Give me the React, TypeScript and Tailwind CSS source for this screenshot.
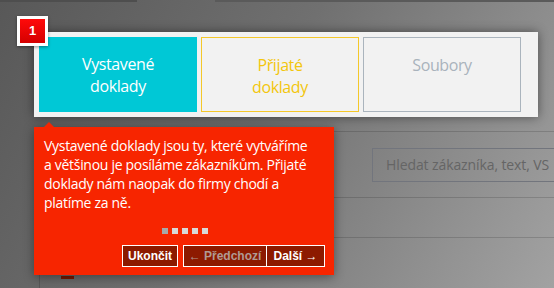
import React from 'react';

const openSans = { fontFamily: '"Open Sans", "Noto Sans", sans-serif' };

const Tab: React.FC<{ label: React.ReactNode; className: string }> = ({ label, className }) => (
  <div className={`w-[158px] h-[75px] pt-[16px] text-center text-[16px] font-medium leading-[22px] tracking-[-0.4px] ${className}`}>
    {label}
  </div>
);

const App: React.FC = () => {
  return (
    <div
      className="relative w-[554px] h-[288px] overflow-hidden bg-[linear-gradient(120deg,#585858_0%,#707070_45%,#a2a2a2_100%)]"
      style={openSans}
    >
      {/* dimmed page underneath */}
      <div className="flex h-[2px]">
        <div className="w-[137px] bg-[#4e4e4e]" />
        <div className="w-[78px]" />
        <div className="flex-1 bg-[#5a5a5a]" />
      </div>
      <div className="ml-[39px] mt-[129px] border-l border-t border-black/15">
        <div className="h-[66px] border-b border-black/15 pl-[332px] pt-[16px]">
          <div className="h-[34px] w-[240px] border border-[#72757d] pl-[13px] text-[14px] leading-[32px] tracking-[-0.1px] text-[#656565]">
            Hledat zákazníka, text, VS
          </div>
        </div>
        <div className="h-[40px] border-b border-black/15" />
        <div className="h-[51px]">
          <div className="ml-[21px] mt-[38px] h-[3px] w-[13px] bg-[#7a1800]" />
        </div>
      </div>

      {/* highlighted element */}
      <div className="absolute left-[34px] top-[32px] flex gap-[4px] bg-[#f2f2f2] pl-[5px] pr-[17px] py-[5px] shadow-[0_0_10px_rgba(0,0,0,0.45)]">
        <Tab label={<>Vystavené<br />doklady</>} className="bg-[#00c8d6] text-white" />
        <Tab label={<>Přijaté<br />doklady</>} className="border border-[#f4c82a] text-[#f3c60d]" />
        <Tab label="Soubory" className="border border-[#aab4bd] text-[#a9b3bc]" />
      </div>

      {/* step badge */}
      <div
        className="absolute left-[17px] top-[16px] border-[3px] border-white bg-[linear-gradient(#ff0a0a,#d40000)] w-[31px] h-[30px] flex items-center justify-center text-white text-[13px] font-bold shadow-[0_1px_3px_rgba(0,0,0,0.4)]"
        style={{ fontFamily: '"Liberation Sans", Arial, sans-serif' }}
      >
        1
      </div>

      {/* tooltip */}
      <div className="absolute left-[34px] top-[127px] w-[300px] h-[148px] bg-[#f72500] pl-[10px] pr-[9px] pt-[9px] shadow-[0_2px_10px_rgba(0,0,0,0.4)]">
        <div className="absolute left-[10px] top-[-5px] w-0 h-0 border-x-[5px] border-x-transparent border-b-[5px] border-b-[#f72500]" />
        <p className="text-white text-[14px] font-medium leading-[19px] tracking-[-0.3px] whitespace-nowrap">
          Vystavené doklady jsou ty, které vytváříme
          <br />a většinou je posíláme zákazníkům. Přijaté
          <br />doklady nám naopak do firmy chodí a
          <br />platíme za ně.
        </p>
        <div className="mt-[16px] flex justify-center gap-[4px]">
          <div className="w-[6px] h-[6px] bg-[#a8a8a8]" />
          <div className="w-[6px] h-[6px] bg-[#d9d9d9]" />
          <div className="w-[6px] h-[6px] bg-[#d9d9d9]" />
          <div className="w-[6px] h-[6px] bg-[#d9d9d9]" />
          <div className="w-[6px] h-[6px] bg-[#d9d9d9]" />
        </div>
        <div
          className="mt-[11px] flex justify-end gap-[5px] text-[12px] font-bold"
          style={{ fontFamily: '"Liberation Sans", Arial, sans-serif' }}
        >
          <button className="h-[22px] w-[56px] border border-white bg-[#8d1a00] text-white">Ukončit</button>
          <div className="flex">
            <button className="h-[22px] w-[84px] border border-white bg-[#8d1a00] text-[#b09a94]">← Předchozí</button>
            <button className="h-[22px] w-[58px] border border-l-0 border-white bg-[#8d1a00] text-white">Další →</button>
          </div>
        </div>
      </div>
    </div>
  );
};

export default App;
